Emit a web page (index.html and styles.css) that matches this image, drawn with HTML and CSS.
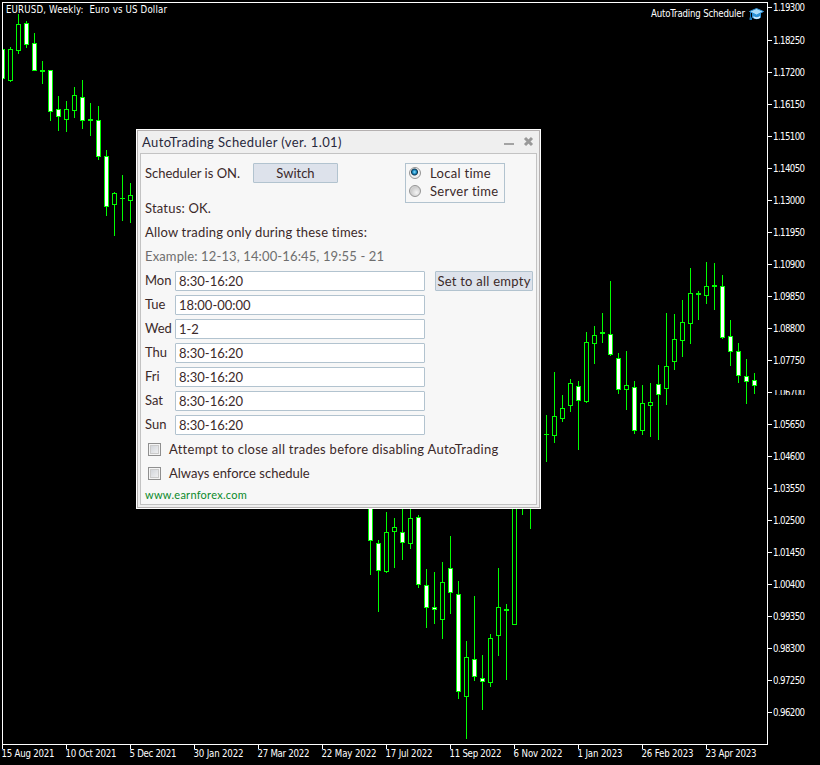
FILE: index.html
```html
<!DOCTYPE html>
<html lang="en">
<head>
    <meta charset="utf-8">
    <title>AutoTrading Scheduler</title>
    <link rel="stylesheet" href="styles.css">
</head>
<body>
    <svg id="chart" class="chart" width="820" height="765" viewBox="0 0 820 765">
        <path class="frame" d="M2.5 2.5H767.5V744.5H2.5Z"/>
        <g id="candles"></g>
        <g id="axes"></g>
        <text class="label" x="6" y="13" textLength="161" xml:space="preserve">EURUSD, Weekly:  Euro vs US Dollar</text>
        <text class="label" x="651" y="17" textLength="94">AutoTrading Scheduler</text>
        <!-- expert advisor cap -->
        <g transform="translate(749 8)">
            <path d="M3 5V9.5Q7.500 13 12 9.500V5Z" fill="#2f93d8"/>
            <path d="M4.500 8Q7.500 10.500 11 8V10Q7.500 12 4.500 10Z" fill="#d4efff"/>
            <path d="M0.500 3.500L7.500 0.500L14.500 3.500L7.500 7Z" fill="#a9dcfa" stroke="#2f93d8"/>
            <path d="M1.500 4V10" stroke="#1976b8"/>
            <rect x="0.500" y="9.500" width="2.500" height="2.500" fill="#1976b8"/>
        </g>
    </svg>

    <div class="dialog">
        <div class="caption">
            <span class="caption-text">AutoTrading Scheduler (ver. 1.01)</span>
            <svg class="caption-icons" width="30" height="12" viewBox="0 0 30 12">
                <rect x="0" y="7" width="10" height="2" fill="#a3a3a3"/>
                <path d="M21 2L28 9M28 2L21 9" stroke="#999" stroke-width="3"/>
            </svg>
        </div>
        <div class="client">
            <div class="top-row">
                <span class="state">Scheduler is ON.</span>
                <button class="btn switch">Switch</button>
                <div class="radio-group">
                    <label><i class="radio checked"></i>Local time</label>
                    <label><i class="radio"></i>Server time</label>
                </div>
            </div>
            <div class="line">Status: OK.</div>
            <div class="line">Allow trading only during these times:</div>
            <div class="line hint">Example: 12-13, 14:00-16:45, 19:55 - 21</div>
            <div class="schedule">
                <div class="days">
                    <div class="day"><span>Mon</span><div class="edit">8:30-16:20</div></div>
                    <div class="day"><span>Tue</span><div class="edit">18:00-00:00</div></div>
                    <div class="day"><span>Wed</span><div class="edit">1-2</div></div>
                    <div class="day"><span>Thu</span><div class="edit">8:30-16:20</div></div>
                    <div class="day"><span>Fri</span><div class="edit">8:30-16:20</div></div>
                    <div class="day"><span>Sat</span><div class="edit">8:30-16:20</div></div>
                    <div class="day"><span>Sun</span><div class="edit">8:30-16:20</div></div>
                </div>
                <button class="btn set-all">Set to all empty</button>
            </div>
            <label class="check"><i class="box"></i><span class="attempt">Attempt to close all trades before disabling AutoTrading</span></label>
            <label class="check"><i class="box"></i>Always enforce schedule</label>
            <a class="site">www.earnforex.com</a>
        </div>
    </div>
    <script src="script.js"></script>
</body>
</html>
```

FILE: styles.css
```css
body {
    margin: 0;
    width: 820px;
    height: 765px;
    overflow: hidden;
    background: #000;
    font-family: Lato, sans-serif;
    font-size: 13px;
    color: #3b2929;
}

/* Chart */
.chart {
    display: block;
    shape-rendering: crispEdges;
}

.chart g[transform] {
    shape-rendering: auto;
}

.frame {
    fill: none;
    stroke: #fff;
}

.tick {
    fill: #fff;
}

.label {
    font-family: "DejaVu Sans Condensed", "DejaVu Sans", sans-serif;
    font-stretch: condensed;
    font-size: 9.6px;
    fill: #fff;
}

.wick, .body {
    fill: #0f0;
}

.bull {
    fill: #000;
}

.bear {
    fill: #fff;
}

/* Dialog window */
.dialog {
    position: absolute;
    left: 136px;
    top: 129px;
    width: 405px;
    height: 380px;
    box-sizing: border-box;
    border: 1px solid #fff;
    background: #efefef;
    box-shadow: inset 0 0 0 1px #b4b0b0;
    padding: 1px 3px 3px;
    display: flex;
    flex-direction: column;
    white-space: nowrap;
}

.caption {
    flex: none;
    height: 22px;
    display: flex;
    align-items: center;
    justify-content: space-between;
    padding: 0 3px 0 2px;
}

.caption-text {
    color: #28283c;
    letter-spacing: 0.38px;
}

.client {
    flex: 1;
    box-sizing: border-box;
    border: 1px solid #c3c3c3;
    background: #f7f7f7;
    padding: 9px 3px 0 4px;
}

.top-row {
    display: flex;
    align-items: flex-start;
    height: 34px;
    line-height: 20px;
}

.state {
    width: 108px;
}

.btn {
    box-sizing: border-box;
    height: 20px;
    padding: 0;
    border: 1px solid #b2c3cf;
    border-radius: 1px;
    background: #dde2eb;
    color: inherit;
    font: inherit;
    line-height: 19px;
}

.switch {
    width: 85px;
}

.radio-group {
    box-sizing: border-box;
    width: 100px;
    height: 40px;
    margin-left: 67px;
    padding: 0 0 0 3px;
    border: 1px solid #b2c3cf;
    line-height: 18px;
    letter-spacing: 0.3px;
}

.radio-group label {
    display: flex;
    align-items: center;
    height: 18px;
}

.radio {
    box-sizing: border-box;
    width: 12px;
    height: 12px;
    margin-right: 9px;
    border: 1px solid #949494;
    border-radius: 50%;
    background: radial-gradient(circle at 65% 65%, #f4f4f4, #ccc 60%, #eee);
}

.radio.checked {
    background: radial-gradient(circle at 45% 40%, #8fe0ff 0, #1686bd 2px, #103650 3px, #f0f0f0 4px);
}

.line {
    height: 24px;
    line-height: 22px;
    letter-spacing: 0.19px;
}

.hint {
    color: #6e6e6e;
    letter-spacing: 0.13px;
}

.schedule {
    box-sizing: border-box;
    display: flex;
    gap: 10px;
    padding-top: 2px;
    height: 168px;
}

.day {
    display: flex;
    height: 24px;
}

.day span {
    width: 30px;
    line-height: 19px;
}

.edit {
    box-sizing: border-box;
    width: 250px;
    height: 20px;
    padding-left: 3px;
    border: 1px solid #b2c3cf;
    border-radius: 1px;
    background: #fff;
    line-height: 19px;
}

.set-all {
    width: 98px;
    letter-spacing: 0.25px;
}

.check {
    display: flex;
    align-items: center;
    height: 24px;
    padding-left: 3px;
}

.attempt {
    letter-spacing: 0.27px;
}

.box {
    box-sizing: border-box;
    width: 13px;
    height: 13px;
    margin-right: 8px;
    border: 1px solid #8f8f8f;
    background: linear-gradient(135deg, #cbcfd5, #f6f6f6);
    box-shadow: inset 0 0 0 1px #f4f4f4, inset 0 0 0 2px #cbcbcb;
}

.site {
    display: block;
    font-size: 11px;
    line-height: 19px;
    letter-spacing: 0.26px;
    color: #0a8a2a;
}
```

FILE: script.js
```javascript
// x, high, top, bottom, low, kind: 1 = bear, 0 = bull
const candles = [
    [2, 49, 49, 79, 79, 1], [10, 47, 49, 81, 82, 0], [18, 14, 24, 51, 54, 0],
    [26, 21, 23, 45, 48, 1], [34, 33, 43, 71, 71, 1], [42, 61, 70, 72, 84, 0],
    [50, 70, 70, 112, 121, 1], [58, 96, 109, 117, 131, 1], [66, 101, 109, 120, 132, 0],
    [74, 87, 95, 111, 118, 0], [82, 80, 97, 121, 129, 1], [90, 103, 119, 121, 136, 0],
    [98, 106, 120, 157, 160, 1], [106, 150, 156, 207, 216, 1], [114, 192, 193, 205, 236, 0],
    [122, 175, 198, 199, 221, 0], [130, 183, 195, 201, 223, 0],
    [370, 490, 490, 541, 575, 1], [378, 540, 543, 571, 612, 1], [386, 512, 532, 572, 573, 0],
    [394, 518, 527, 532, 568, 0], [402, 490, 532, 543, 560, 1], [410, 490, 518, 544, 549, 0],
    [418, 515, 517, 585, 588, 1], [426, 569, 585, 608, 628, 1], [434, 572, 607, 610, 624, 1],
    [442, 562, 582, 620, 639, 0], [450, 536, 568, 593, 614, 1], [458, 581, 594, 692, 699, 1],
    [466, 641, 657, 697, 739, 0], [474, 596, 659, 677, 681, 1], [482, 655, 678, 682, 710, 1],
    [490, 634, 638, 683, 687, 0], [498, 568, 607, 636, 656, 0], [506, 604, 609, 611, 680, 0],
    [514, 480, 480, 625, 625, 0], [522, 480, 480, 490, 515, 0], [530, 470, 470, 480, 529, 0],
    [546, 415, 434, 435, 462, 0], [554, 372, 416, 436, 443, 0], [562, 395, 408, 419, 422, 0],
    [570, 379, 383, 406, 412, 0], [578, 381, 386, 401, 450, 1], [586, 332, 342, 402, 403, 0],
    [594, 326, 335, 344, 364, 0], [602, 313, 332, 334, 343, 0], [610, 281, 334, 355, 356, 1],
    [618, 353, 358, 390, 394, 1], [626, 351, 385, 390, 410, 0], [634, 381, 387, 431, 434, 1],
    [642, 385, 403, 431, 435, 0], [650, 383, 402, 406, 437, 0], [658, 365, 384, 395, 440, 1],
    [666, 313, 366, 389, 405, 0], [674, 314, 339, 362, 370, 0], [682, 300, 322, 341, 357, 0],
    [690, 268, 293, 324, 344, 0], [698, 291, 293, 295, 320, 0], [706, 262, 286, 296, 304, 0],
    [714, 263, 285, 287, 310, 0], [722, 275, 286, 338, 339, 1], [730, 320, 336, 352, 366, 1],
    [738, 343, 351, 376, 383, 1], [746, 359, 376, 382, 404, 1], [754, 373, 380, 386, 394, 1]
];

// label and its width
const dates = [
    ["15 Aug 2021", 53], ["10 Oct 2021", 51], ["5 Dec 2021", 47], ["30 Jan 2022", 50],
    ["27 Mar 2022", 52], ["22 May 2022", 55], ["17 Jul 2022", 47], ["11 Sep 2022", 52],
    ["6 Nov 2022", 49], ["1 Jan 2023", 45], ["26 Feb 2023", 52], ["23 Apr 2023", 51]
];

const NS = "http://www.w3.org/2000/svg";

function add(parent, tag, attrs, text) {
    const el = document.createElementNS(NS, tag);
    for (const k in attrs) el.setAttribute(k, attrs[k]);
    if (text) el.textContent = text;
    parent.appendChild(el);
}

function rect(parent, cls, x, y, width, height) {
    add(parent, "rect", { class: cls, x, y, width, height });
}

const chart = document.getElementById("candles");
candles.forEach(([x, high, top, bottom, low, bear]) => {
    const left = Math.max(x - 2, 3);
    const inner = Math.max(x - 1, 3);
    rect(chart, "wick", Math.max(x, 3), high, x > 2 ? 1 : 0, low - high);
    rect(chart, "body", left, top, x + 3 - left, bottom - top);
    if (bottom - top > 2) {
        rect(chart, bear ? "bear" : "bull", inner, top + 1, x + 2 - inner, bottom - top - 2);
    }
});

const axes = document.getElementById("axes");
for (let i = 0; i < 23; i++) {
    const y = i ? 8 + i * 32 : 7;
    rect(axes, "tick", 768, y, 4, 1);
    add(axes, "text", { class: "label", x: 773, y: y + 4, textLength: 32 }, (1.193 - i * 0.0105).toFixed(5));
}
// the current price strip cuts the label at 1.06700
rect(axes, "bull", 772, 387, 40, 3);
rect(axes, "bull", 772, 395, 40, 3);

dates.forEach(([text, width], i) => {
    const x = 2 + i * 64;
    rect(axes, "tick", x, 745, 1, 4);
    add(axes, "text", { class: "label", x: x - 0.5, y: 757, textLength: width }, text);
});
```
